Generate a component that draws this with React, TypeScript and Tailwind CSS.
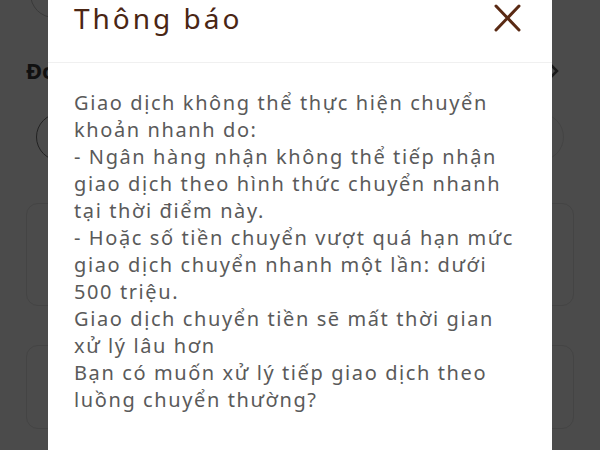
import React from "react";

const lines = [
  "Giao dịch không thể thực hiện chuyển",
  "khoản nhanh do:",
  "- Ngân hàng nhận không thể tiếp nhận",
  "giao dịch theo hình thức chuyển nhanh",
  "tại thời điểm này.",
  "- Hoặc số tiền chuyển vượt quá hạn mức",
  "giao dịch chuyển nhanh một lần: dưới",
  "500 triệu.",
  "Giao dịch chuyển tiền sẽ mất thời gian",
  "xử lý lâu hơn",
  "Bạn có muốn xử lý tiếp giao dịch theo",
  "luồng chuyển thường?",
];

export default function App() {
  return (
    <div
      className="relative w-[600px] h-[450px] overflow-hidden bg-[#4b4b4b]"
      style={{ fontFamily: "'Noto Sans', sans-serif" }}
    >
      {/* dimmed page underneath */}
      <div className="flex flex-col px-[26px]">
        <div className="-mt-[30px] ml-[4px] w-[60px] h-[48px] rounded-full border border-[#3a3a3a]" />
        <div className="mt-[36px] flex items-center justify-between">
          <span className="text-[22px] font-bold text-[#111]">Đơn vị</span>
          <svg width="12" height="18" viewBox="0 0 12 18" className="mr-[14px]">
            <path d="M2 2 L9 9 L2 16" stroke="#1a1a1a" strokeWidth="2.5" fill="none" />
          </svg>
        </div>
        <div className="mt-[26px] flex items-center justify-between px-[10px]">
          <div className="w-[48px] h-[48px] rounded-full border border-[#222]" />
          <div className="w-[48px] h-[48px] rounded-full border border-[#444]" />
        </div>
        <div className="mt-[42px] h-[103px] rounded-[12px] border border-[#444]" />
        <div className="mt-[39px] h-[84px] rounded-[12px] border border-[#444]" />
      </div>

      {/* modal */}
      <div className="absolute left-[48px] top-0 w-[504px] h-[450px] bg-white flex flex-col">
        <div className="h-[63px] flex items-start justify-between pl-[26px] pr-[30px] border-b border-[#f0f0f0]">
          <span className="text-[28px] leading-[36px] text-[#4a2614] tracking-[3px]">Thông báo</span>
          <svg width="30" height="30" viewBox="0 0 30 30" className="mt-[3px]">
            <path d="M4 3 L27 27 M27 3 L4 27" stroke="#5a2a14" strokeWidth="3" strokeLinecap="round" />
          </svg>
        </div>
        <div className="pl-[26px] pt-[26px] text-[20px] leading-[27px] text-[#5a5a5a] tracking-[1.6px]">
          {lines.map((l, i) => (
            <div key={i} className="whitespace-nowrap">{l}</div>
          ))}
        </div>
      </div>
    </div>
  );
}
